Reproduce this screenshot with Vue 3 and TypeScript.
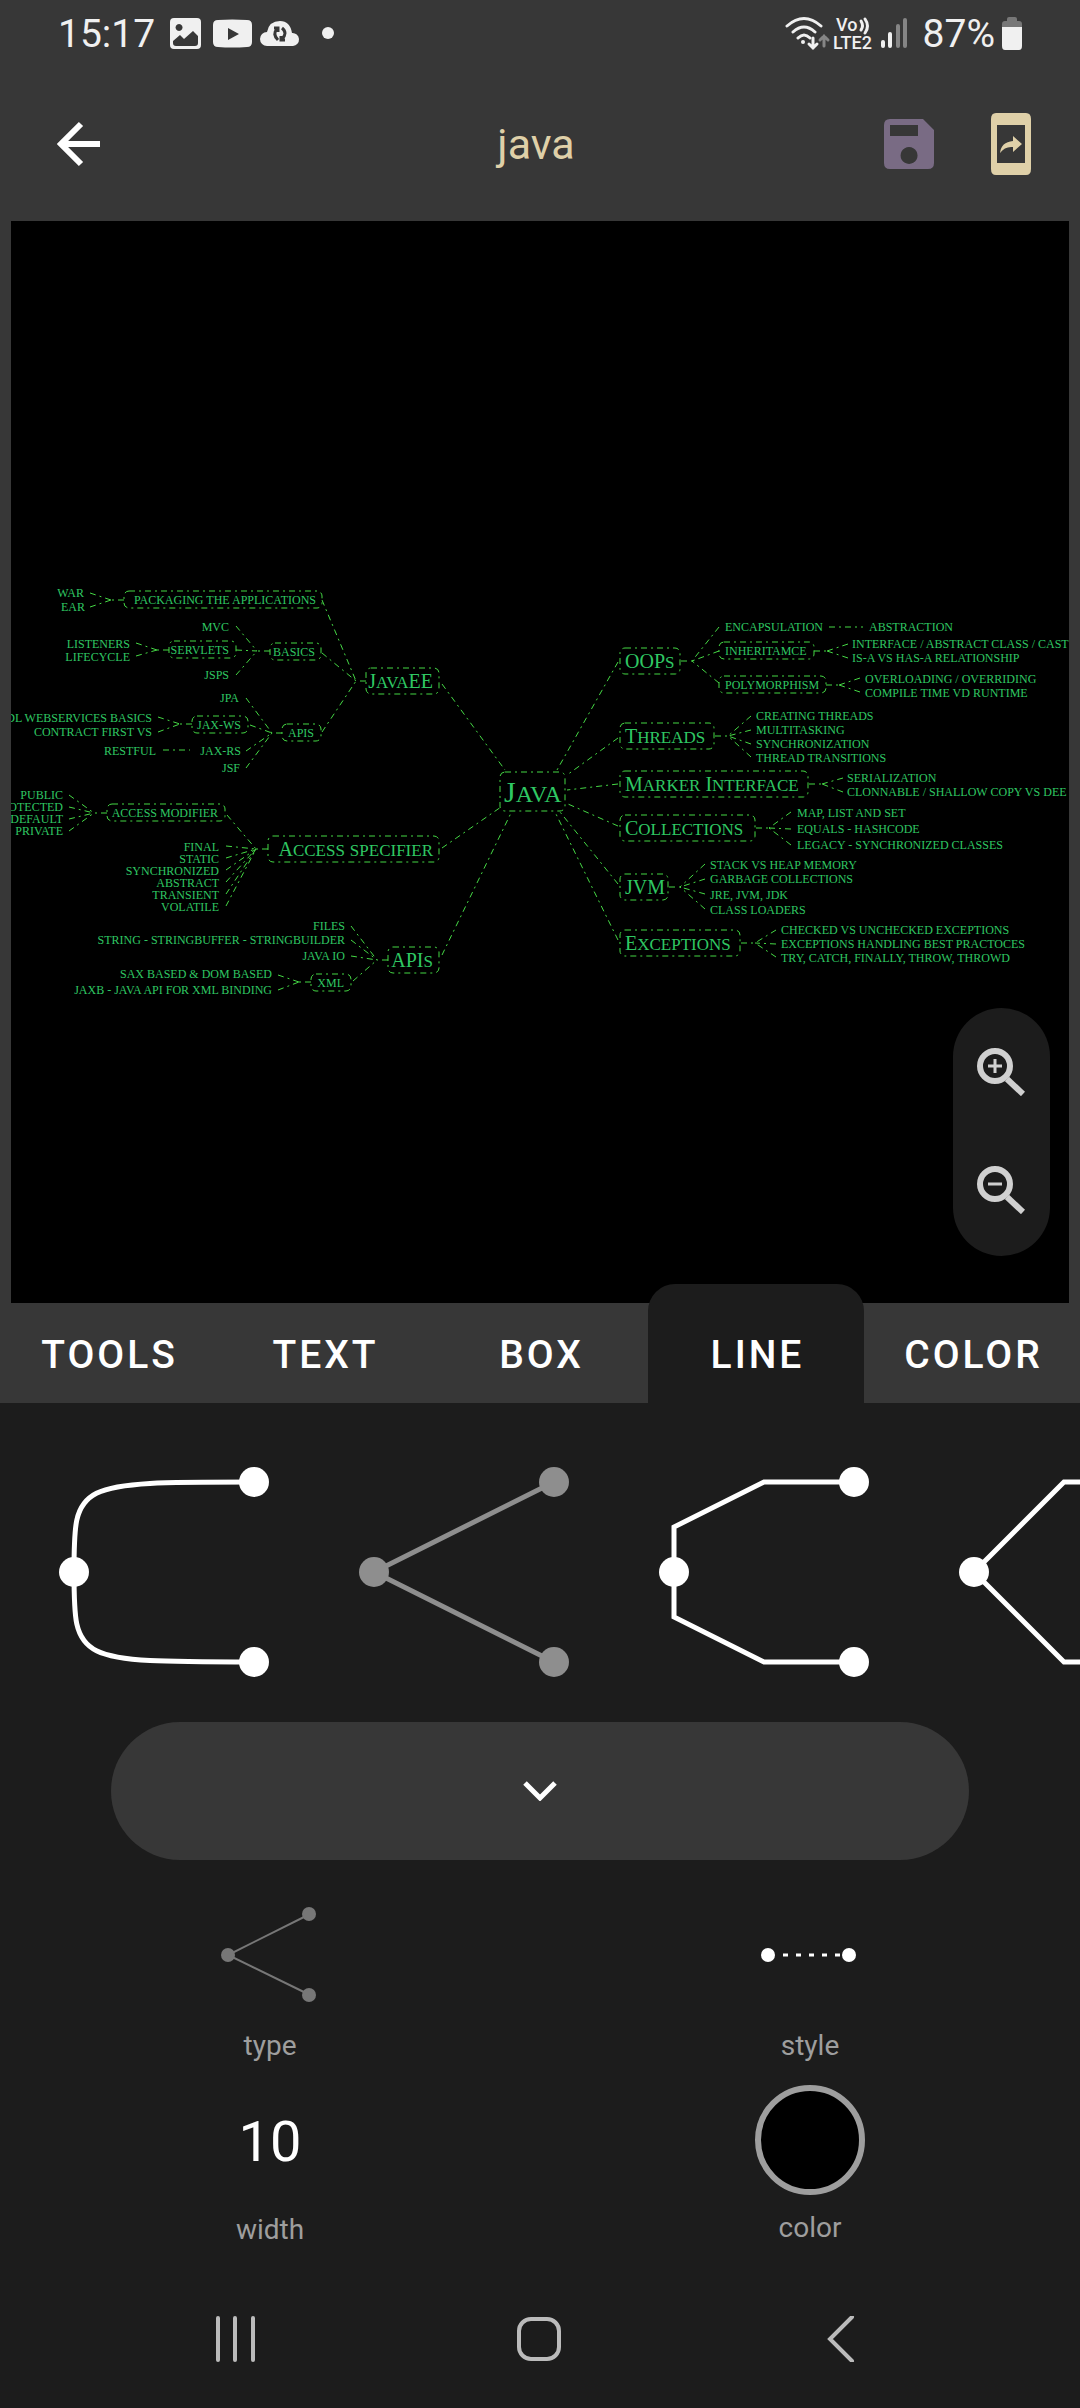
<script setup lang="ts">
import { ref } from 'vue'

type Side = 'left' | 'right'
type Point = [number, number]

interface Topic {
  runs: string[]
  x: number
  y: number
  side: Side
  level: 'root' | 'main' | 'sub'
}

interface Frame {
  x: number
  y: number
  w: number
  h: number
}

interface Fan {
  from: Point
  hub: Point
  to: Point[]
}

const title = 'java'

const tabs = ['TOOLS', 'TEXT', 'BOX', 'LINE', 'COLOR']
const activeTab = ref('LINE')

const lineTypes = [
  { name: 'curve', d: 'M60 132C60 42 60 42 240 42M60 132C60 222 60 222 240 222' },
  { name: 'straight', d: 'M240 42L60 132L240 222' },
  { name: 'bevel', d: 'M240 42H150L60 87V177L150 222H240' },
  { name: 'angle', d: 'M240 42H150L60 132L150 222H240' },
]
const selectedType = ref('straight')
const lineWidth = ref(10)

// Labels are drawn in tall small capitals, so each one is split into
// lower-case runs and runs of everything else.
const t = (label: string, x: number, y: number, side: Side, level: Topic['level'] = 'sub'): Topic => ({
  runs: label.match(/[a-z]+|[^a-z]+/g) ?? [],
  x,
  y,
  side,
  level,
})

const isLower = (run: string): boolean => /[a-z]/.test(run)

const topics: Topic[] = [
  t('Java', 504, 802, 'right', 'root'),
  t('JavaEE', 433, 688, 'left', 'main'),
  t('Access specifier', 433, 856, 'left', 'main'),
  t('APIs', 433, 967, 'left', 'main'),
  t('OOPs', 625, 668, 'right', 'main'),
  t('Threads', 625, 743, 'right', 'main'),
  t('Marker Interface', 625, 791, 'right', 'main'),
  t('Collections', 625, 835, 'right', 'main'),
  t('JVM', 625, 894, 'right', 'main'),
  t('Exceptions', 625, 950, 'right', 'main'),
  t('Packaging the Applications', 316, 604, 'left'),
  t('WAR', 84, 597, 'left'),
  t('EAR', 85, 611, 'left'),
  t('Basics', 315, 656, 'left'),
  t('MVC', 229, 631, 'left'),
  t('Servlets', 229, 654, 'left'),
  t('JSPs', 229, 679, 'left'),
  t('Listeners', 130, 648, 'left'),
  t('Lifecycle', 130, 661, 'left'),
  t('APIs', 314, 737, 'left'),
  t('JPA', 239, 702, 'left'),
  t('JAX-WS', 241, 729, 'left'),
  t('JAX-RS', 241, 755, 'left'),
  t('JSF', 240, 772, 'left'),
  t('SDL Webservices basics', 152, 722, 'left'),
  t('Contract first vs', 152, 736, 'left'),
  t('RESTful', 156, 755, 'left'),
  t('Access modifier', 218, 817, 'left'),
  t('public', 63, 799, 'left'),
  t('otected', 63, 811, 'left'),
  t('default', 63, 823, 'left'),
  t('private', 63, 835, 'left'),
  t('final', 219, 851, 'left'),
  t('static', 219, 863, 'left'),
  t('synchronized', 219, 875, 'left'),
  t('abstract', 219, 887, 'left'),
  t('transient', 219, 899, 'left'),
  t('volatile', 219, 911, 'left'),
  t('Files', 345, 930, 'left'),
  t('String - StringBuffer - StringBuilder', 345, 944, 'left'),
  t('Java IO', 345, 960, 'left'),
  t('XML', 344, 987, 'left'),
  t('SAX Based & DOM Based', 272, 978, 'left'),
  t('JAXB - Java API for XML Binding', 272, 994, 'left'),
  t('Encapsulation', 725, 631, 'right'),
  t('Abstraction', 869, 631, 'right'),
  t('Inheritamce', 725, 655, 'right'),
  t('Interface / Abstract Class / Cast', 852, 648, 'right'),
  t('IS-A vs HAS-A Relationship', 852, 662, 'right'),
  t('Polymorphism', 725, 689, 'right'),
  t('Overloading / Overriding', 865, 683, 'right'),
  t('Compile time vd Runtime', 865, 697, 'right'),
  t('Creating threads', 756, 720, 'right'),
  t('Multitasking', 756, 734, 'right'),
  t('Synchronization', 756, 748, 'right'),
  t('Thread Transitions', 756, 762, 'right'),
  t('Serialization', 847, 782, 'right'),
  t('Clonnable / Shallow copy vs Dee', 847, 796, 'right'),
  t('Map, List and Set', 797, 817, 'right'),
  t('Equals - Hashcode', 797, 833, 'right'),
  t('Legacy - Synchronized Classes', 797, 849, 'right'),
  t('Stack vs Heap Memory', 710, 869, 'right'),
  t('Garbage Collections', 710, 883, 'right'),
  t('JRE, JVM, JDK', 710, 899, 'right'),
  t('Class loaders', 710, 914, 'right'),
  t('Checked vs Unchecked Exceptions', 781, 934, 'right'),
  t('Exceptions handling best practoces', 781, 948, 'right'),
  t('try, catch, finally, throw, throwd', 781, 962, 'right'),
]

const frames: Frame[] = [
  { x: 500, y: 772, w: 65, h: 39 },
  { x: 366, y: 668, w: 73, h: 26 },
  { x: 268, y: 836, w: 171, h: 26 },
  { x: 388, y: 947, w: 51, h: 26 },
  { x: 620, y: 648, w: 60, h: 26 },
  { x: 620, y: 723, w: 94, h: 26 },
  { x: 620, y: 771, w: 188, h: 26 },
  { x: 620, y: 815, w: 135, h: 26 },
  { x: 620, y: 874, w: 48, h: 26 },
  { x: 620, y: 930, w: 120, h: 26 },
  { x: 124, y: 591, w: 198, h: 17 },
  { x: 169, y: 641, w: 67, h: 17 },
  { x: 270, y: 643, w: 51, h: 17 },
  { x: 192, y: 716, w: 56, h: 17 },
  { x: 282, y: 724, w: 39, h: 17 },
  { x: 107, y: 804, w: 118, h: 17 },
  { x: 311, y: 974, w: 40, h: 17 },
  { x: 719, y: 642, w: 95, h: 17 },
  { x: 719, y: 676, w: 107, h: 17 },
]

const rootLines: [Point, Point][] = [
  [[442, 684], [505, 770]],
  [[442, 848], [501, 807]],
  [[442, 955], [511, 813]],
  [[618, 662], [557, 770]],
  [[618, 738], [567, 775]],
  [[618, 784], [567, 790]],
  [[618, 826], [568, 804]],
  [[618, 884], [560, 812]],
  [[618, 940], [555, 812]],
  [[163, 750], [190, 750]],
  [[829, 627], [863, 627]],
]

const fans: Fan[] = [
  { from: [366, 681], hub: [356, 681], to: [[322, 600], [322, 653], [322, 732]] },
  { from: [124, 600], hub: [111, 600], to: [[90, 593], [90, 607]] },
  { from: [270, 651], hub: [257, 651], to: [[236, 626], [236, 650], [236, 675]] },
  { from: [169, 650], hub: [157, 650], to: [[136, 643], [136, 656]] },
  { from: [282, 733], hub: [272, 733], to: [[246, 698], [250, 725], [246, 751], [246, 768]] },
  { from: [192, 724], hub: [180, 724], to: [[158, 717], [158, 732]] },
  { from: [268, 849], hub: [256, 849], to: [[227, 815], [226, 846], [226, 858], [226, 870], [226, 882], [226, 894], [226, 906]] },
  { from: [107, 813], hub: [94, 813], to: [[69, 795], [69, 807], [69, 819], [69, 831]] },
  { from: [388, 960], hub: [377, 960], to: [[351, 926], [351, 940], [351, 956], [353, 981]] },
  { from: [311, 982], hub: [299, 982], to: [[278, 975], [278, 990]] },
  { from: [681, 661], hub: [692, 661], to: [[719, 627], [719, 651], [719, 683]] },
  { from: [814, 651], hub: [827, 651], to: [[848, 644], [848, 658]] },
  { from: [826, 685], hub: [839, 685], to: [[860, 678], [860, 692]] },
  { from: [715, 736], hub: [728, 736], to: [[751, 716], [751, 730], [751, 744], [751, 757]] },
  { from: [809, 784], hub: [822, 784], to: [[843, 778], [843, 792]] },
  { from: [756, 828], hub: [769, 828], to: [[791, 812], [791, 829], [791, 845]] },
  { from: [669, 887], hub: [680, 887], to: [[705, 864], [705, 879], [705, 894], [705, 909]] },
  { from: [741, 943], hub: [755, 943], to: [[776, 930], [776, 944], [776, 957]] },
]

const segment = (a: Point, b: Point): string => `M${a[0]} ${a[1]}L${b[0]} ${b[1]}`

const links: string[] = [
  ...rootLines.map(([a, b]) => segment(a, b)),
  ...fans.flatMap((f) => [segment(f.from, f.hub), ...f.to.map((p) => segment(p, f.hub))]),
]
</script>

<template>
  <div class="screen">
    <div class="status">
      <div class="status-group">
        <span class="clock">15:17</span>
        <svg class="notices" width="168" height="36" viewBox="0 0 168 36" aria-hidden="true">
          <path fill-rule="evenodd" d="M5 2H27Q31 2 31 6V29Q31 33 27 33H4Q0 33 0 29V6Q0 2 4 2ZM9 8A3.500 3.500 0 1 0 9.100 8ZM3 25V27Q3 30 6 30H25Q28 30 28 27V20L23 15L14 23L10 19Z" />
          <path fill-rule="evenodd" d="M48 4Q62 3 77 4Q82 4 82 9V26Q82 31 77 31Q62 32 48 31Q43 31 43 26V9Q43 4 48 4ZM58 12V24L69 18Z" />
          <path d="M97 30A7 7 0 0 1 97 16Q99 5 110 5Q120 5 122 17A6 6 0 0 1 123 30Z" />
          <path class="sync" d="M108 24Q102 18 107 13M104 12H108V16M112 12Q118 17 112 23M115 24H111V20" />
          <circle cx="158" cy="17" r="6" />
        </svg>
      </div>
      <div class="status-group">
        <svg class="radio" width="124" height="36" viewBox="0 0 124 36" aria-hidden="true">
          <path class="arc" d="M2 10Q19 -5 36 10M8 16Q19 6 30 16M13 22Q19 16 25 22" />
          <circle cx="18" cy="26" r="2" />
          <path class="arrow" d="M28 22V32M24 28L28 32L32 28" />
          <path class="arrow dim" d="M39 30V20M35 24L39 20L43 24" />
          <text x="51" y="15">Vo</text>
          <path class="wave" d="M76 5Q79 10 76 14M80 3Q85 10 80 17" />
          <text x="48" y="33">LTE2</text>
          <path class="bar" d="M98 26V30M105 18V30" />
          <path class="bar dim" d="M113 10V30M120 4V30" />
        </svg>
        <span class="charge">87%</span>
        <svg width="20" height="36" viewBox="0 0 20 36" aria-hidden="true">
          <path class="spent" d="M0 12V8Q0 5 3 5H5V3Q5 1 7 1H13Q15 1 15 3V5H17Q20 5 20 8V12Z" />
          <path d="M0 11H20V30Q20 34 17 34H3Q0 34 0 30Z" />
        </svg>
      </div>
    </div>

    <header class="app-bar">
      <button class="icon-btn" type="button" aria-label="Back">
        <svg width="44" height="46" viewBox="0 0 44 46">
          <path class="back" d="M44 23H5M25 3L5 23L25 43" />
        </svg>
      </button>
      <h1>{{ title }}</h1>
      <div class="actions">
        <button class="icon-btn" type="button" aria-label="Save">
          <svg width="50" height="50" viewBox="0 0 50 50">
            <path class="save" fill-rule="evenodd" d="M6 0H39L50 11V44Q50 50 44 50H6Q0 50 0 44V6Q0 0 6 0ZM6 6V17H34V6ZM25 28A8.500 8.500 0 1 0 25.100 28Z" />
          </svg>
        </button>
        <button class="icon-btn" type="button" aria-label="Share to phone">
          <svg width="40" height="62" viewBox="0 0 40 62">
            <path class="share" fill-rule="evenodd" d="M5 0H35Q40 0 40 6V56Q40 62 35 62H5Q0 62 0 56V6Q0 0 5 0ZM6 12V50H34V12ZM22 23L31 31L22 39V34Q14 33 9 40Q10 29 22 28Z" />
          </svg>
        </button>
      </div>
    </header>

    <main class="canvas">
      <svg class="map" viewBox="11 221 1058 1082" role="img" aria-label="java mind map">
        <g class="links">
          <path v-for="(d, i) in links" :key="i" :d="d" />
        </g>
        <g class="frames">
          <rect v-for="(f, i) in frames" :key="i" :x="f.x" :y="f.y" :width="f.w" :height="f.h" rx="5" />
        </g>
        <text
          v-for="(n, i) in topics"
          :key="i"
          :x="n.x"
          :y="n.y"
          :class="[n.level, n.side]"
        ><tspan v-for="(run, j) in n.runs" :key="j" :class="{ low: isLower(run) }">{{ run }}</tspan></text>
      </svg>
      <div class="zoom">
        <button class="icon-btn" type="button" aria-label="Zoom in">
          <svg width="48" height="48" viewBox="0 0 48 48">
            <circle cx="18" cy="18" r="15" />
            <path class="handle" d="M30 31L46 46" />
            <path class="sign" d="M11 18H25M18 11V25" />
          </svg>
        </button>
        <button class="icon-btn" type="button" aria-label="Zoom out">
          <svg width="48" height="48" viewBox="0 0 48 48">
            <circle cx="18" cy="18" r="15" />
            <path class="handle" d="M30 31L46 46" />
            <path class="sign" d="M11 18H25" />
          </svg>
        </button>
      </div>
    </main>

    <nav class="tabs" role="tablist">
      <button
        v-for="tab in tabs"
        :key="tab"
        type="button"
        role="tab"
        :aria-selected="tab === activeTab"
        :class="['tab', { active: tab === activeTab }]"
        @click="activeTab = tab"
      >{{ tab }}</button>
    </nav>

    <section class="panel">
      <div class="types">
        <button
          v-for="type in lineTypes"
          :key="type.name"
          type="button"
          :aria-label="type.name"
          :class="['type', { chosen: type.name === selectedType }]"
          @click="selectedType = type.name"
        >
          <svg width="300" height="264" viewBox="0 0 300 264">
            <path :d="type.d" />
            <circle cx="60" cy="132" r="15" />
            <circle cx="240" cy="42" r="15" />
            <circle cx="240" cy="222" r="15" />
          </svg>
        </button>
      </div>

      <button class="collapse" type="button" aria-label="Collapse">
        <svg width="34" height="20" viewBox="0 0 34 20">
          <path d="M2 2L17 17L32 2" />
        </svg>
      </button>

      <div class="settings">
        <button class="setting" type="button">
          <svg class="muted" width="110" height="110" viewBox="0 0 110 110" aria-hidden="true">
            <path d="M95 14L13 55L95 95" />
            <circle cx="13" cy="55" r="7" />
            <circle cx="94" cy="14" r="7" />
            <circle cx="94" cy="95" r="7" />
          </svg>
          <span>type</span>
        </button>
        <button class="setting" type="button">
          <svg class="bright" width="110" height="110" viewBox="0 0 110 110" aria-hidden="true">
            <path d="M28 55H94" />
            <circle cx="13" cy="55" r="7" />
            <circle cx="94" cy="55" r="7" />
          </svg>
          <span>style</span>
        </button>
        <button class="setting lower" type="button">
          <strong>{{ lineWidth }}</strong>
          <span>width</span>
        </button>
        <button class="setting lower" type="button">
          <i class="swatch"></i>
          <span>color</span>
        </button>
      </div>
    </section>

    <footer class="system">
      <button class="icon-btn" type="button" aria-label="Recent apps">
        <svg width="60" height="46" viewBox="0 0 60 46"><path d="M12 2V44M29 2V44M47 2V44" /></svg>
      </button>
      <button class="icon-btn" type="button" aria-label="Home">
        <svg width="60" height="46" viewBox="0 0 60 46"><rect x="10" y="3" width="40" height="40" rx="12" /></svg>
      </button>
      <button class="icon-btn" type="button" aria-label="Back">
        <svg width="60" height="46" viewBox="0 0 60 46"><path d="M41 1L19 23L41 45" /></svg>
      </button>
    </footer>
  </div>
</template>

<style>
body {
  margin: 0;
  background: #1c1c1c;
}
</style>

<style scoped>
.screen {
  display: flex;
  flex-direction: column;
  min-height: 100vh;
  overflow: hidden;
  background: #373737;
  color: #fff;
  font-family: Roboto, "Liberation Sans", sans-serif;
}

button {
  margin: 0;
  padding: 0;
  border: 0;
  background: none;
  color: inherit;
  font: inherit;
  cursor: pointer;
}

svg {
  display: block;
  flex: none;
}

.icon-btn {
  display: flex;
  align-items: center;
  justify-content: center;
}

.status {
  display: flex;
  justify-content: space-between;
  padding: 16px 58px 0;
  color: #f0f0f0;
  font-size: 39px;
  line-height: 36px;
}

.status-group {
  display: flex;
  align-items: center;
}

.status svg {
  fill: #f0f0f0;
}

.notices {
  margin-left: 15px;
}

.notices .sync {
  fill: none;
  stroke: #373737;
  stroke-width: 3;
}

.radio {
  margin-right: 14px;
}

.radio path {
  fill: none;
  stroke: #f0f0f0;
  stroke-linecap: round;
  stroke-width: 3;
}

.radio .bar {
  stroke-width: 4;
}

.radio .dim {
  stroke: #858585;
}

.radio text {
  font-size: 18px;
  font-weight: 500;
}

.charge {
  margin-right: 7px;
}

.status .spent {
  fill: #777;
}

.app-bar {
  display: grid;
  grid-template-columns: 1fr auto 1fr;
  align-items: center;
  height: 154px;
  margin-top: 15px;
  padding: 0 49px 0 41px;
  box-sizing: border-box;
}

.app-bar > .icon-btn {
  justify-self: start;
  padding-left: 15px;
}

.app-bar h1 {
  margin: 0;
  color: #dfd0a8;
  font-size: 43px;
  font-weight: 400;
  line-height: 52px;
}

.actions {
  display: flex;
  align-items: center;
  justify-self: end;
  gap: 57px;
}

.back {
  fill: none;
  stroke: #fff;
  stroke-width: 6;
}

.save {
  fill: #796b84;
}

.share {
  fill: #dfd0a8;
}

.canvas {
  position: relative;
  margin: 0 11px;
  background: #000;
}

.map {
  width: 100%;
  height: auto;
}

.map text {
  fill: #2fc763;
  font-family: "Liberation Serif", serif;
}

.map .low {
  text-transform: uppercase;
}

.map .left {
  text-anchor: end;
}

.map .root {
  font-size: 30px;
}

.map .root .low {
  font-size: 24px;
}

.map .main {
  font-size: 20px;
}

.map .main .low {
  font-size: 17px;
}

.map .sub {
  font-size: 12px;
}

.map .sub .low {
  font-size: 12px;
}

.links,
.frames {
  fill: none;
  stroke: #45d845;
  stroke-width: 1;
  stroke-dasharray: 6 4 2 4;
}

.zoom {
  position: absolute;
  right: 19px;
  bottom: 47px;
  display: flex;
  flex-direction: column;
  gap: 70px;
  padding: 40px 25px 42px 24px;
  border-radius: 49px;
  background: #1c1c1c;
}

.zoom svg {
  fill: none;
  stroke: #d0d0d0;
  stroke-width: 6;
}

.zoom .sign {
  stroke-width: 3;
}

.tabs {
  display: grid;
  grid-template-columns: repeat(5, 1fr);
  height: 100px;
}

.tab {
  position: relative;
  padding: 3px 0 0 3px;
  font-size: 39px;
  font-weight: 500;
  letter-spacing: 3px;
}

.tab.active {
  margin-top: -19px;
  padding-top: 22px;
  border-radius: 27px 27px 0 0;
  background: #1c1c1c;
}

.panel {
  background: #1c1c1c;
}

.types {
  display: flex;
  overflow: hidden;
  padding: 37px 0 18px 14px;
}

.type {
  flex: none;
}

.type path {
  fill: none;
  stroke: #fff;
  stroke-width: 5;
}

.type circle {
  fill: #fff;
}

.type.chosen path {
  stroke: #8e8e8e;
}

.type.chosen circle {
  fill: #8e8e8e;
}

.collapse {
  display: flex;
  align-items: center;
  justify-content: center;
  width: calc(100% - 222px);
  height: 138px;
  margin: 0 111px;
  border-radius: 69px;
  background: #373737;
}

.collapse path {
  fill: none;
  stroke: #fff;
  stroke-width: 5;
}

.settings {
  display: grid;
  grid-template-columns: 1fr 1fr;
  row-gap: 21px;
  padding-top: 40px;
}

.setting {
  display: flex;
  flex-direction: column;
  align-items: center;
  gap: 18px;
  color: #9e9e9e;
  font-size: 28px;
  line-height: 36px;
}

.setting.lower {
  gap: 15px;
}

.setting strong {
  padding-top: 2px;
  color: #fff;
  font-size: 56px;
  font-weight: 400;
  line-height: 110px;
}

.setting path {
  fill: none;
  stroke-width: 2;
}

.muted {
  fill: #777;
  stroke: #777;
}

.bright {
  fill: #fff;
}

.bright path {
  stroke: #fff;
  stroke-width: 3;
  stroke-dasharray: 5 8;
}

.muted circle {
  stroke: none;
}

.swatch {
  box-sizing: border-box;
  width: 110px;
  height: 110px;
  border: 6px solid #9e9e9e;
  border-radius: 50%;
  background: #000;
}

.system {
  display: flex;
  flex: 1;
  align-items: center;
  justify-content: space-between;
  padding: 22px 209px 0 206px;
  background: #1c1c1c;
}

.system svg {
  fill: none;
  stroke: #bbb;
  stroke-width: 4;
  stroke-linecap: round;
}
</style>
